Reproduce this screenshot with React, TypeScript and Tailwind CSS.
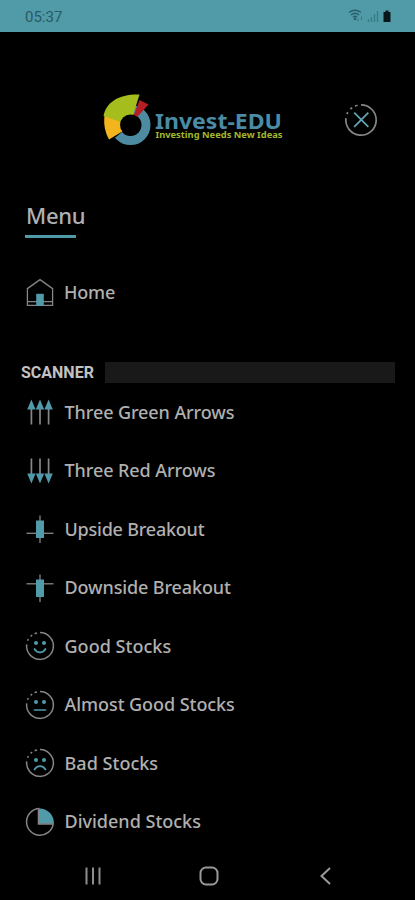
import type { ReactNode } from "react";

const TEAL = "#519aa9";
const GREY = "#868688";

function DashedRing() {
    return (
        <g fill="none" stroke={GREY} strokeWidth="1.5">
            <path d="M15 1.6A13.4 13.4 0 1 1 1.7 13.4" />
            <path d="M2.6 9.8A13.4 13.4 0 0 1 3.4 8.2M5.6 5.4A13.4 13.4 0 0 1 7.2 4.1M9.6 2.8A13.4 13.4 0 0 1 12 2" />
        </g>
    );
}

function Icon({ children }: { children: ReactNode }) {
    return (
        <svg width="30" height="30" viewBox="0 0 30 30" className="shrink-0">
            {children}
        </svg>
    );
}

function HomeIcon() {
    return (
        <Icon>
            <path d="M2.4 11.6L15 2.6L27.6 11.6V28.4H2.4ZM2.4 24.6H27.6" fill="none" stroke={GREY} strokeWidth="1.3" />
            <rect x="11.2" y="16.8" width="7.6" height="12" fill={TEAL} />
        </Icon>
    );
}

function ArrowsIcon({ down }: { down?: boolean }) {
    return (
        <Icon>
            <g transform={down ? "rotate(180 15 15)" : undefined}>
                <path d="M6.4 11V27.500M15 11V27.500M23.600 11V27.500" stroke={GREY} strokeWidth="1.7" />
                <path d="M6.4 2.500L10.6 12.500H2.2ZM15 2.500L19.2 12.500H10.8ZM23.6 2.500L27.8 12.500H19.4Z" fill={TEAL} />
            </g>
        </Icon>
    );
}

function CandleIcon({ down }: { down?: boolean }) {
    return (
        <Icon>
            <path d={down ? "M1.5 10.8H28.5" : "M1.5 19.3H28.5"} stroke={GREY} strokeWidth="1.3" />
            <path d="M15 1.5V29" stroke={GREY} strokeWidth="1.3" />
            <rect x="11" y="6.5" width="8" height="17.5" fill={TEAL} />
        </Icon>
    );
}

function FaceIcon({ mouth }: { mouth: string }) {
    return (
        <Icon>
            <DashedRing />
            <circle cx="11" cy="12" r="2" fill={TEAL} />
            <circle cx="19" cy="12" r="2" fill={TEAL} />
            <path d={mouth} fill="none" stroke={TEAL} strokeWidth="1.7" strokeLinecap="round" />
        </Icon>
    );
}

function PieIcon() {
    return (
        <Icon>
            <path d="M14 1.6A14 14 0 0 1 28.8 16.8H14Z" fill={TEAL} />
            <path d="M14.3 1.5A13.4 13.4 0 1 0 28.2 17H13.5V1.5" fill="none" stroke={GREY} strokeWidth="1.5" />
        </Icon>
    );
}

function Logo() {
    return (
        <svg width="182" height="54" viewBox="0 0 182 54">
            <circle cx="27.5" cy="32" r="15.5" fill="none" stroke="#4d8ba2" strokeWidth="9" />
            <path d="M27 32L2 22V34L6 48L13 44Z" fill="#000" />
            <path d="M27 32L1.500 22.500C0.500 32 2 39 6 46.500L20 38Z" fill="#f4b51c" />
            <path d="M27 32L0.500 23C3 9 16 1 36.500 1.500Z" fill="#a5be1e" />
            <path d="M27 32L36.500 7L45.500 11.500Z" fill="#b31f25" />
            <circle cx="27.5" cy="32" r="10.5" fill="#000" />
            <text x="52" y="35.500" textLength="127" lengthAdjust="spacingAndGlyphs" fontSize="21.500" fontWeight="700" fontFamily="Noto Sans, sans-serif" fill="#4a8ba5">Invest-EDU</text>
            <text x="52.500" y="45" textLength="127" lengthAdjust="spacingAndGlyphs" fontSize="9" fontWeight="700" fontFamily="Noto Sans, sans-serif" fill="#a2b92b">Investing Needs New Ideas</text>
        </svg>
    );
}

const items = [
    { label: "Three Green Arrows", spacing: "tracking-[-0.09px]", icon: <ArrowsIcon /> },
    { label: "Three Red Arrows", spacing: "tracking-[-0.08px]", icon: <ArrowsIcon down /> },
    { label: "Upside Breakout", spacing: "tracking-[-0.22px]", icon: <CandleIcon /> },
    { label: "Downside Breakout", spacing: "tracking-[-0.12px]", icon: <CandleIcon down /> },
    { label: "Good Stocks", spacing: "tracking-[0.03px]", icon: <FaceIcon mouth="M9.500 18C12 22.500 18 22.500 20.500 18" /> },
    { label: "Almost Good Stocks", spacing: "tracking-[-0.06px]", icon: <FaceIcon mouth="M9.500 20H20.500" /> },
    { label: "Bad Stocks", spacing: "tracking-[0.03px]", icon: <FaceIcon mouth="M9.500 21.500C12 17 18 17 20.500 21.500" /> },
    { label: "Dividend Stocks", spacing: "tracking-[0px]", icon: <PieIcon /> },
];

export default function App() {
    return (
        <div className="flex h-[900px] w-[415px] flex-col overflow-hidden bg-black font-['Noto_Sans',sans-serif] text-[#b0b0b0]">
            <div className="flex h-8 shrink-0 items-center justify-between bg-[#519aa8] pl-[25px] pr-[23px]">
                <span className="pt-[2px] font-['Roboto',sans-serif] text-[15px] text-[#275966]">05:37</span>
                <svg width="44" height="14" viewBox="0 0 44 14">
                    <path d="M1 3.500Q7 -1 13 3.500M3 6Q7 2.500 11 6M5 8.300Q7 6.500 9 8.300" fill="none" stroke="#27606c" strokeWidth="1.500" />
                    <circle cx="7" cy="10" r="1.300" fill="#27606c" />
                    <path d="M10 12.500V9.500M13.500 11V7.500" stroke="#36727e" strokeWidth="1" />
                    <path d="M20.500 13V10M23.500 13V8M26.500 13V5M29.500 13V2" stroke="#377985" strokeWidth="1.300" />
                    <path d="M35.500 3H37.500V1.500H40.500V3H42.500V13H35.500Z" fill="#081719" />
                </svg>
            </div>

            <div className="flex h-[176px] shrink-0 items-center justify-between pl-[103px] pr-[37px]">
                <Logo />
                <svg width="34" height="34" viewBox="0 0 30 30">
                    <DashedRing />
                    <path d="M9 8.500L21.500 21M21.500 8.500L9 21" stroke="#64a7b5" strokeWidth="1.500" />
                </svg>
            </div>

            <div className="h-[54px] shrink-0 pl-[25px]">
                <h1 className="h-[27px] pl-px text-[22px] font-medium leading-[15px] tracking-[-0.3px]">Menu</h1>
                <div className="h-[3px] w-[51px] bg-[#519aa9]" />
            </div>

            <div className="flex h-[60px] shrink-0 items-center gap-[9px] pl-[25px]">
                <HomeIcon />
                <span className="text-[18px] font-medium tracking-[-0.2px]">Home</span>
            </div>

            <div className="mt-10 flex h-[21px] shrink-0 items-center pl-[21px] pr-5">
                <span className="w-[84px] pt-px font-['Roboto',sans-serif] text-[16px] font-bold text-[#c2c2c2]">SCANNER</span>
                <div className="h-[21px] flex-1 bg-[#191919]" />
            </div>

            <div className="shrink-0">
                {items.map((item) => (
                    <div key={item.label} className="flex h-[58.5px] items-center gap-[9.5px] pl-[25px]">
                        {item.icon}
                        <span className={`whitespace-nowrap text-[18px] font-medium ${item.spacing}`}>{item.label}</span>
                    </div>
                ))}
            </div>

            <div className="flex h-[49px] shrink-0 items-center pl-[84px]">
                <svg width="18" height="18" viewBox="0 0 18 18">
                    <path d="M2.500 0.500V17.500M9 0.500V17.500M15.500 0.500V17.500" stroke="#8d8d8d" strokeWidth="2" />
                </svg>
                <svg width="20" height="20" viewBox="0 0 20 20" className="ml-[97px]">
                    <rect x="1.500" y="1.500" width="17" height="17" rx="5.500" fill="none" stroke="#999" strokeWidth="2" />
                </svg>
                <svg width="14" height="20" viewBox="0 0 14 20" className="ml-[100px]">
                    <path d="M11 2L2.500 10L11 18" fill="none" stroke="#999" strokeWidth="2" />
                </svg>
            </div>
        </div>
    );
}
